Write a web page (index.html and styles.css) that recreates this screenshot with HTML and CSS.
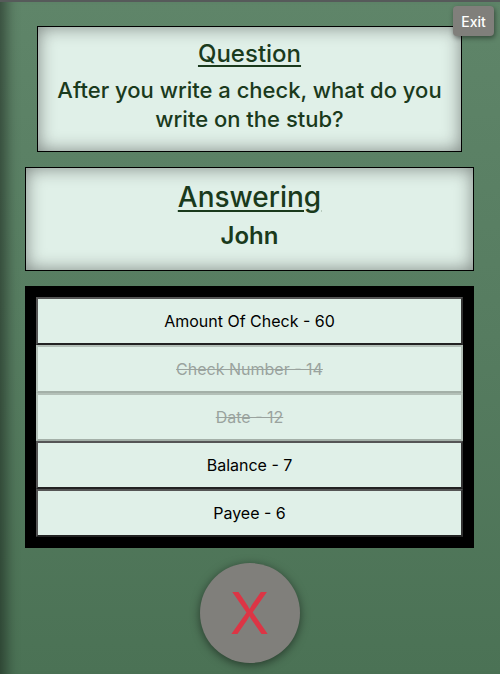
FILE: index.html
```html
<!DOCTYPE html>
<html>
<head>
<meta charset="utf-8">
<link rel="stylesheet" href="styles.css">
</head>
<body>
<div class="screen">
  <button class="exit">Exit</button>
  <section class="card question">
    <h2 class="card-title">Question</h2>
    <p class="question-text">After you write a check, what do you write on the stub?</p>
  </section>
  <section class="card answering">
    <h2 class="card-title big">Answering</h2>
    <p class="player">John</p>
  </section>
  <div class="answers">
    <div class="answer">Amount Of Check - 60</div>
    <div class="answer used">Check Number - 14</div>
    <div class="answer used">Date - 12</div>
    <div class="answer">Balance - 7</div>
    <div class="answer">Payee - 6</div>
  </div>
  <div class="wrong-wrap">
    <button class="wrong">X</button>
  </div>
</div>
</body>
</html>
```
FILE: styles.css
```css
html, body {
  margin: 0;
  padding: 0;
  height: 100%;
}
body {
  font-family: Inter, "Noto Sans", sans-serif;
  background: linear-gradient(to bottom, #5f8569 0%, #567c60 50%, #4b7255 100%);
  border-top: 2px solid #565a5a;
  box-sizing: border-box;
  overflow: hidden;
}
.screen {
  position: relative;
  height: 100%;
  box-sizing: border-box;
  padding: 24px 26px 0 25px;
  display: flex;
  flex-direction: column;
  gap: 15px;
  box-shadow: inset 18px 0 14px -12px rgba(0, 0, 0, 0.45);
}
.exit {
  position: absolute;
  top: 4px;
  right: 6px;
  width: 41px;
  height: 30px;
  border: none;
  border-radius: 4px;
  background: #807f7b;
  color: #fff;
  font-family: Inter, "Noto Sans", sans-serif;
  font-size: 14px;
  font-weight: 500;
  padding: 0;
  box-shadow: 1px 2px 5px rgba(0, 0, 0, 0.45);
}
.card {
  background: #e0f0e8;
  border: 1px solid #000;
  box-shadow: inset 0 0 18px rgba(0, 0, 0, 0.45);
  text-align: center;
  color: #1a3a1c;
  box-sizing: border-box;
}
.question {
  margin: 0 12px;
  height: 126px;
  padding: 12px 16px 0;
}
.answering {
  height: 104px;
  padding: 11px 16px 0;
}
.card-title {
  margin: 0;
  font-size: 24px;
  font-weight: 500;
  text-decoration: underline;
  text-underline-offset: 3px;
  text-decoration-thickness: 2px;
  line-height: 30px;
}
.card-title.big {
  font-size: 28px;
  line-height: 36px;
}
.question-text {
  margin: 7px 0 0;
  font-size: 22px;
  font-weight: 500;
  line-height: 29px;
}
.player {
  margin: 6px 0 0;
  font-size: 24px;
  font-weight: 600;
  line-height: 30px;
}
.answers {
  border: 11px solid #000;
  background: #000;
  display: flex;
  flex-direction: column;
}
.answer {
  height: 48px;
  box-sizing: border-box;
  background: #e0f0e8;
  border: 2px solid;
  border-color: #555 #333 #222 #555;
  display: flex;
  align-items: center;
  justify-content: center;
  font-size: 16px;
  color: #000;
}
.answer.used {
  color: #9aa39e;
  text-decoration: line-through;
  border-color: #b4c0b8 #b0bcb4 #a4b0a8 #b4c0b8;
}
.wrong-wrap {
  display: flex;
  justify-content: center;
}
.wrong {
  width: 100px;
  height: 100px;
  border-radius: 50%;
  border: none;
  background: #807f7b;
  color: #dc3545;
  font-family: Inter, "Noto Sans", sans-serif;
  font-size: 58px;
  font-weight: 400;
  padding: 0;
  line-height: 1;
  box-shadow: 0 2px 10px rgba(0, 0, 0, 0.5);
}
```
